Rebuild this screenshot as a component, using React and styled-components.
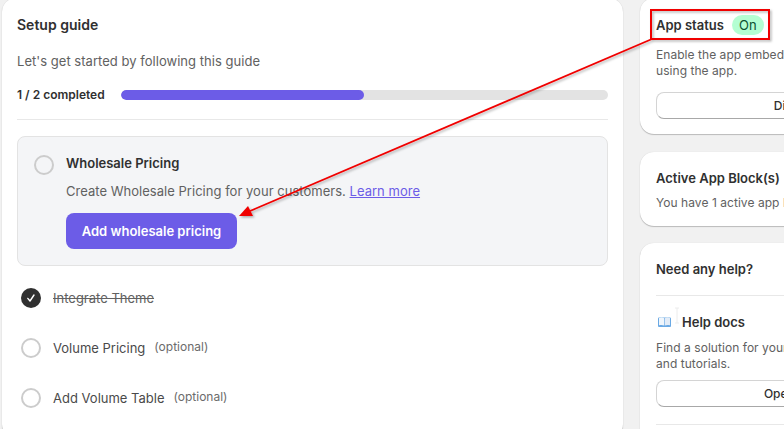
import React from 'react'
import styled, { createGlobalStyle } from 'styled-components'

const GlobalStyle = createGlobalStyle`
	html, body {
		margin: 0;
		padding: 0;
		height: 429px;
		overflow: hidden;
		background: #f1f1f1;
	}
	* {
		box-sizing: border-box;
	}
`

const Page = styled.div`
	position: relative;
	width: 784px;
	height: 429px;
	overflow: hidden;
	display: flex;
	align-items: flex-start;
	gap: 17px;
	padding-left: 2px;
	font-family: Inter, 'Liberation Sans', sans-serif;
	color: #303030;
`

const Card = styled.section`
	background: #fff;
	border-radius: 14px;
	box-shadow: 0 1px 1px rgba(0, 0, 0, 0.22), 0 0 1px rgba(0, 0, 0, 0.14);
`

const GuideCard = styled(Card)`
	flex: none;
	width: 621px;
	height: 440px;
	margin-top: -2px;
	padding: 17px 15px 0;
`

const Title = styled.h2`
	margin: 0;
	font-size: ${p => p.$size || 13}px;
	line-height: 20px;
	font-weight: 600;
	color: #303030;
`

const Lead = styled.p`
	margin: 16px 0 0;
	font-size: 13px;
	line-height: 20px;
	letter-spacing: 0.03px;
	color: #616161;
`

const ProgressRow = styled.div`
	display: flex;
	align-items: center;
	gap: 16px;
	margin-top: 14px;
	padding-bottom: 14px;
	border-bottom: 1px solid #e8e8e8;
`

const ProgressLabel = styled.span`
	flex: none;
	font-size: 12px;
	line-height: 20px;
	font-weight: 600;
	color: #303030;
`

const Track = styled.div`
	flex: 1;
	height: 10px;
	border-radius: 5px;
	background: #e3e3e3;
	overflow: hidden;
`

const Fill = styled.div`
	height: 100%;
	border-radius: 5px;
	background: #6c5ce7;
`

const ActiveStep = styled.div`
	display: flex;
	gap: 12px;
	margin-top: 16px;
	height: 130px;
	padding: 16px;
	background: #f4f5f7;
	border: 1px solid #e3e3e3;
	border-radius: 8px;
`

const Circle = styled.span`
	flex: none;
	display: flex;
	align-items: center;
	justify-content: center;
	width: 20px;
	height: 20px;
	margin-top: ${p => p.$offset || 0}px;
	border-radius: 50%;
	border: ${p => (p.$done ? 'none' : '2px solid #cccccc')};
	background: ${p => (p.$done ? '#303030' : 'transparent')};
`

const StepBody = styled.div`
	display: flex;
	flex-direction: column;
	align-items: flex-start;
`

const StepTitle = styled.div`
	font-size: 13px;
	line-height: 20px;
	font-weight: 600;
	color: #303030;
`

const StepText = styled.div`
	margin-top: 8px;
	font-size: 13px;
	line-height: 20px;
	letter-spacing: 0.025px;
	color: #616161;
`

const LearnLink = styled.a`
	color: #6c5ce7;
	text-decoration: underline;
`

const PrimaryButton = styled.button`
	margin-top: 12px;
	width: 171px;
	height: 36px;
	border: 0;
	border-radius: 8px;
	background: #6c5ce7;
	color: #fff;
	font-family: inherit;
	font-size: 13px;
	font-weight: 600;
`

const StepList = styled.div`
	display: flex;
	flex-direction: column;
	gap: 30px;
	margin-top: 22px;
	padding-left: 4px;
`

const StepRow = styled.div`
	display: flex;
	align-items: center;
	gap: 12px;
	height: 20px;
`

const StepName = styled.span`
	font-size: 13px;
	line-height: 20px;
	color: ${p => (p.$done ? '#616161' : '#4a4a4a')};
	text-decoration: ${p => (p.$done ? 'line-through' : 'none')};
`

const Optional = styled.span`
	margin: 0 0 2px -3px;
	font-size: 12px;
	line-height: 20px;
	color: #6b6b6b;
`

const Sidebar = styled.aside`
	flex: none;
	width: 310px;
	display: flex;
	flex-direction: column;
	gap: 17px;
	margin-top: -2px;
`

const SideCard = styled(Card)`
	padding: ${p => p.$top || 16}px 16px 15px;
	margin-bottom: ${p => p.$after || 0}px;
`

const StatusRow = styled.div`
	display: flex;
	align-items: center;
	gap: 8px;
	height: 24px;
`

const Badge = styled.span`
	width: 32px;
	height: 20px;
	border-radius: 10px;
	background: #b4fed2;
	color: #0c5132;
	font-size: 13px;
	line-height: 20px;
	text-align: center;
`

const SideText = styled.p`
	margin: ${p => p.$gap}px 0 0;
	font-size: 12px;
	line-height: 16px;
	letter-spacing: 0.05px;
	color: #616161;
	white-space: nowrap;
`

const OutlineButton = styled.button`
	display: block;
	width: 100%;
	height: 27px;
	margin-top: ${p => p.$gap}px;
	border: 1px solid #d4d4d4;
	border-bottom-color: #a8a8a8;
	border-radius: 8px;
	background: #fff;
	color: #303030;
	font-family: inherit;
	font-size: 12px;
	font-weight: 500;
`

const Divider = styled.hr`
	margin: ${p => p.$top || 16}px 0 16px;
	border: 0;
	border-top: 1px solid #e8e8e8;
`

const DocsHeading = styled.div`
	display: flex;
	align-items: center;
	gap: 11px;
	padding-left: 2px;
	font-size: 13px;
	line-height: 20px;
	font-weight: 600;
`

const Overlay = styled.svg`
	position: absolute;
	left: 0;
	top: 0;
	pointer-events: none;
`

const CheckIcon = () => (
	<svg width='12' height='12' viewBox='0 0 12 12' fill='none'>
		<path d='M2.8 6.4 5 9l4-6' stroke='#fff' strokeWidth='1.4' strokeLinecap='round' strokeLinejoin='round' />
	</svg>
)

const BookIcon = () => (
	<svg width='13' height='10' viewBox='0 0 13 10'>
		<rect x='0' y='0.5' width='13' height='9.5' rx='1' fill='#6aa9e4' />
		<path d='M1 1C2.8.2 5 .3 6.2 1.3v7.2C5 7.8 2.8 7.7 1 8.3z' fill='#f0f6fc' />
		<path d='M12 1c-1.8-.8-4-.7-5.2.3v7.2c1.2-.7 3.4-.8 5.2-.2z' fill='#e3ecf7' />
	</svg>
)

const App = () => (
	<Page>
		<GlobalStyle />
		<GuideCard>
			<Title $size={14}>Setup guide</Title>
			<Lead>Let's get started by following this guide</Lead>
			<ProgressRow>
				<ProgressLabel>1 / 2 completed</ProgressLabel>
				<Track>
					<Fill style={{ width: '50%' }} />
				</Track>
			</ProgressRow>
			<ActiveStep>
				<Circle $offset={2} />
				<StepBody>
					<StepTitle>Wholesale Pricing</StepTitle>
					<StepText>
						Create Wholesale Pricing for your customers. <LearnLink>Learn more</LearnLink>
					</StepText>
					<PrimaryButton>Add wholesale pricing</PrimaryButton>
				</StepBody>
			</ActiveStep>
			<StepList>
				<StepRow>
					<Circle $done><CheckIcon /></Circle>
					<StepName $done>Integrate Theme</StepName>
				</StepRow>
				<StepRow>
					<Circle />
					<StepName>Volume Pricing</StepName>
					<Optional>(optional)</Optional>
				</StepRow>
				<StepRow>
					<Circle />
					<StepName>Add Volume Table</StepName>
					<Optional>(optional)</Optional>
				</StepRow>
			</StepList>
		</GuideCard>
		<Sidebar>
			<SideCard $top={15} $after={1}>
				<StatusRow>
					<Title>App status</Title>
					<Badge>On</Badge>
				</StatusRow>
				<SideText $gap={10}>Enable the app embed in your theme before<br />using the app.</SideText>
				<OutlineButton $gap={13}>Disable</OutlineButton>
			</SideCard>
			<SideCard>
				<Title>Active App Block(s)</Title>
				<SideText $gap={7}>You have 1 active app block in your theme</SideText>
			</SideCard>
			<SideCard>
				<Title>Need any help?</Title>
				<Divider />
				<DocsHeading><BookIcon />Help docs</DocsHeading>
				<SideText $gap={8}>Find a solution for your problem with docs<br />and tutorials.</SideText>
				<OutlineButton $gap={8}>Open docs</OutlineButton>
				<Divider $top={17} />
			</SideCard>
		</Sidebar>
		<Overlay width='784' height='429' viewBox='0 0 784 429'>
			<defs>
				<filter id='soft' x='-10%' y='-10%' width='120%' height='120%'>
					<feDropShadow dx='1.5' dy='1.5' stdDeviation='1' floodColor='#000' floodOpacity='0.3' />
				</filter>
			</defs>
			<g filter='url(#soft)'>
				<rect x='651' y='10' width='118' height='29' fill='none' stroke='#f00000' strokeWidth='2' />
				<path d='M652 39 250 211' stroke='#f00000' strokeWidth='1.8' fill='none' />
				<path d='M239 216 248 206 253 216z' fill='#f00000' />
			</g>
			<path d='M675 308h4M677 308v15M675 323h4' stroke='#ececec' strokeWidth='1' fill='none' />
		</Overlay>
	</Page>
)

export default App
